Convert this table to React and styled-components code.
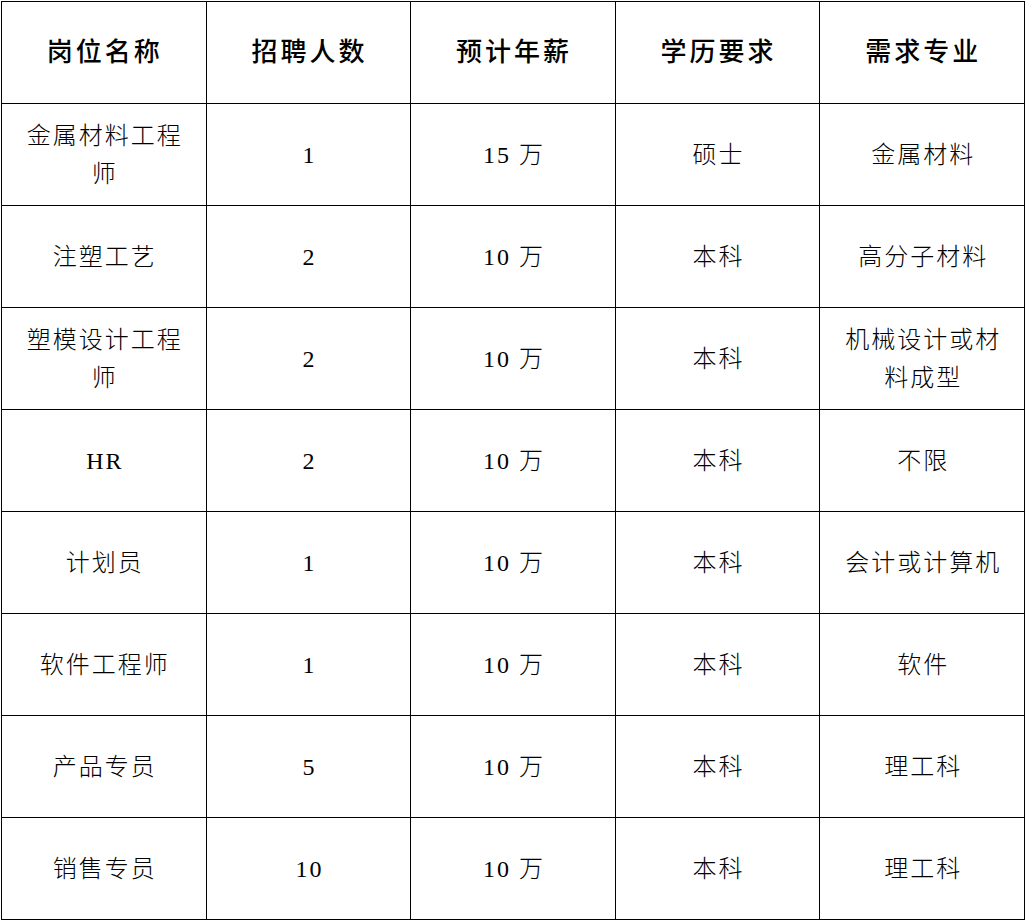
import React from "react";
import styled, { createGlobalStyle } from "styled-components";

const GlobalStyle = createGlobalStyle`
  html, body {
    margin: 0;
    padding: 0;
    background: #ffffff;
  }
  body {
    font-family: "Liberation Serif", "Noto Sans CJK SC", serif;
    color: #000;
  }
`;

const Page = styled.div`
  padding: 1px 0 0 1px;
`;

const Table = styled.div`
  width: 1024px;
  box-sizing: border-box;
  display: grid;
  grid-template-columns: repeat(5, 1fr);
  border-top: 1px solid #000;
  border-left: 1px solid #000;
`;

const Cell = styled.div`
  box-sizing: border-box;
  height: 102px;
  border-right: 1px solid #000;
  border-bottom: 1px solid #000;
  display: flex;
  align-items: center;
  justify-content: center;
  text-align: center;
  padding: 0 20px 0 22px;
  font-family: "Liberation Serif", "Noto Sans CJK SC", serif;
  font-size: ${(p) => (p.$head ? "26px" : "24px")};
  font-weight: ${(p) => (p.$head ? 500 : 300)};
  letter-spacing: ${(p) => (p.$head ? "3px" : "2px")};
  line-height: 38px;
  color: #000;
`;

const headers = ["岗位名称", "招聘人数", "预计年薪", "学历要求", "需求专业"];

const rows = [
  ["金属材料工程师", "1", "15 万", "硕士", "金属材料"],
  ["注塑工艺", "2", "10 万", "本科", "高分子材料"],
  ["塑模设计工程师", "2", "10 万", "本科", "机械设计或材料成型"],
  ["HR", "2", "10 万", "本科", "不限"],
  ["计划员", "1", "10 万", "本科", "会计或计算机"],
  ["软件工程师", "1", "10 万", "本科", "软件"],
  ["产品专员", "5", "10 万", "本科", "理工科"],
  ["销售专员", "10", "10 万", "本科", "理工科"],
];

export default function App() {
  return (
    <Page>
      <GlobalStyle />
      <Table>
        {headers.map((h) => (
          <Cell key={h} $head>
            {h}
          </Cell>
        ))}
        {rows.map((r, i) =>
          r.map((c, j) => <Cell key={`${i}-${j}`}>{c}</Cell>)
        )}
      </Table>
    </Page>
  );
}
